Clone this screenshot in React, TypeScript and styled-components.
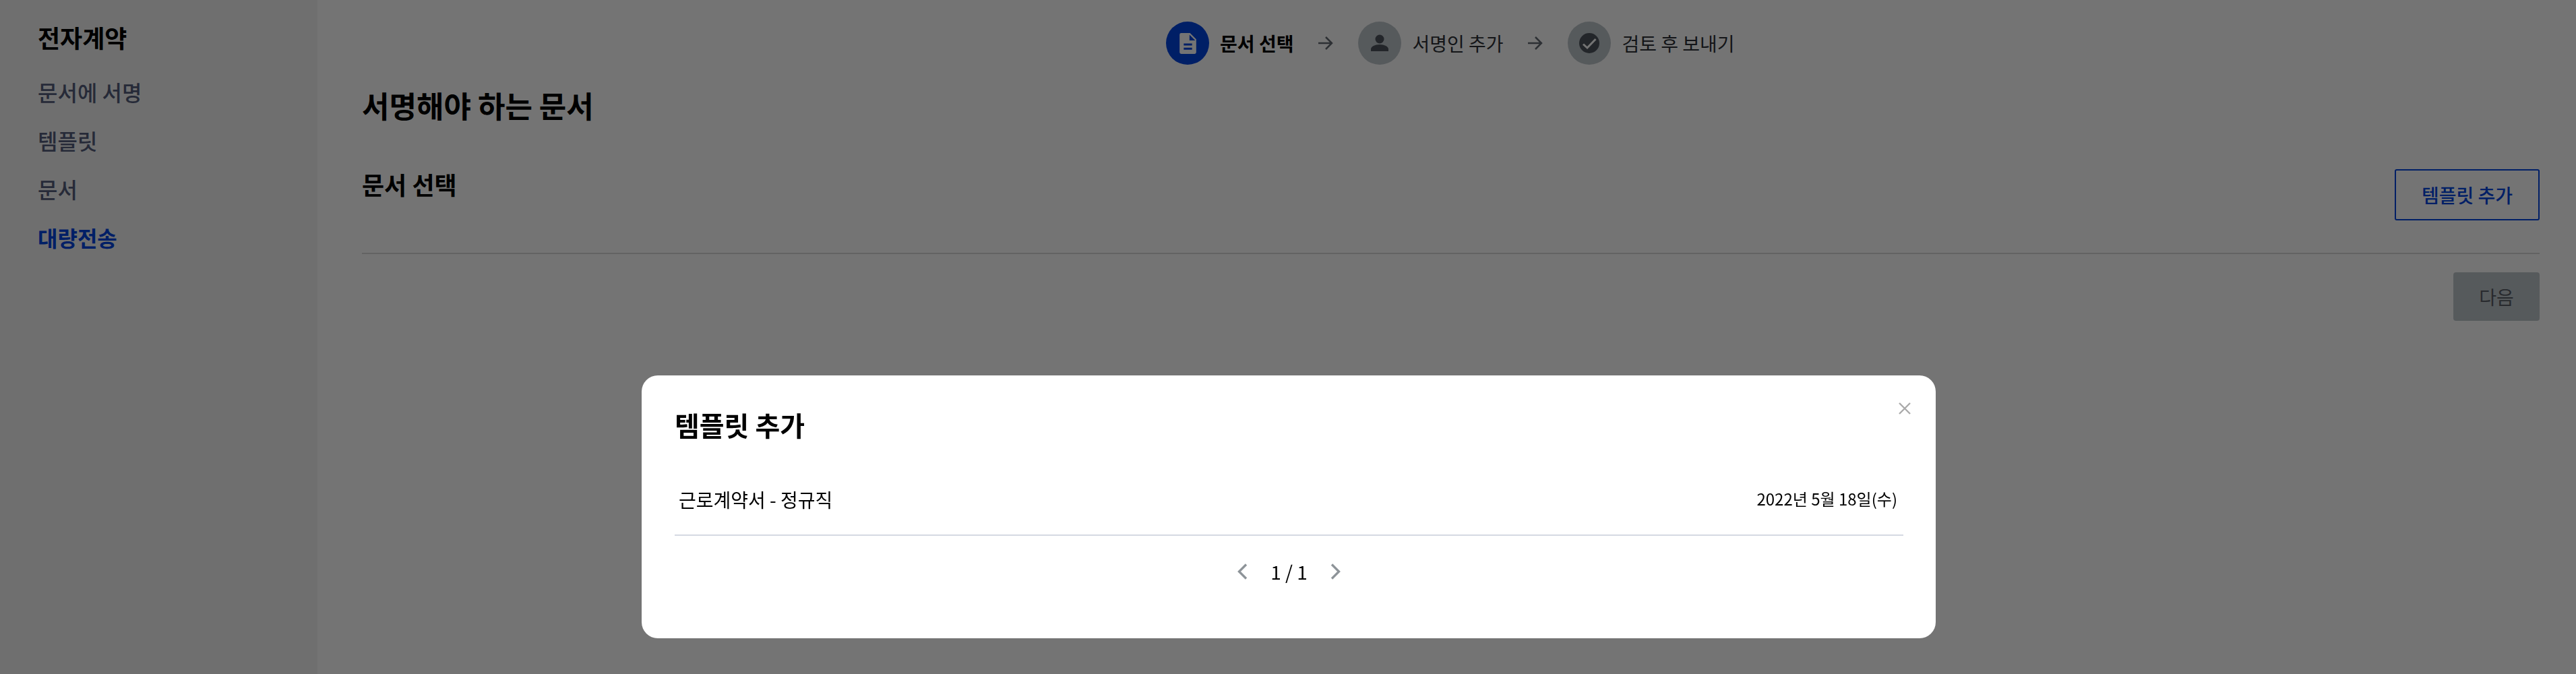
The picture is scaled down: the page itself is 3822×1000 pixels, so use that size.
import React from 'react';
import styled, { createGlobalStyle } from 'styled-components';

const Global = createGlobalStyle`
  html, body { margin: 0; padding: 0; background: #fff; }
  body { font-family: "Noto Sans CJK KR", "Noto Sans", sans-serif; color: #000; }
  * { box-sizing: border-box; }
`;

const Page = styled.div`
  position: relative;
  display: flex;
  width: 3822px;
  height: 1000px;
  overflow: hidden;
`;

const Sidebar = styled.aside`
  width: 471px;
  flex: none;
  background: #f4f4f4;
  padding: 33px 56px;
`;

const SideTitle = styled.div`
  font-size: 36px;
  font-weight: 700;
  line-height: 44px;
  margin-bottom: 23px;
`;

const SideItem = styled.div<{ $active?: boolean }>`
  font-size: 32px;
  font-weight: ${(p) => (p.$active ? 700 : 500)};
  line-height: 72px;
  color: ${(p) => (p.$active ? '#0044e0' : '#555e7c')};
`;

const Main = styled.main`
  flex: 1;
  padding: 32px 54px 0 66px;
`;

const Steps = styled.div`
  display: flex;
  align-items: center;
  height: 64px;
  margin-left: 1193px;
`;

const Step = styled.div`
  display: flex;
  align-items: center;
  gap: 16px;
`;

const StepCircle = styled.div<{ $active?: boolean }>`
  width: 64px;
  height: 64px;
  border-radius: 50%;
  display: flex;
  align-items: center;
  justify-content: center;
  background: ${(p) => (p.$active ? '#0044e0' : '#bec5cb')};
  color: ${(p) => (p.$active ? '#fff' : '#4d545c')};
`;

const StepLabel = styled.span<{ $active?: boolean }>`
  font-size: 28px;
  font-weight: ${(p) => (p.$active ? 700 : 400)};
  color: ${(p) => (p.$active ? '#000' : '#2c3036')};
`;

const StepArrow = styled.span`
  display: flex;
  margin: 0 37px;
  color: #636a72;
`;

const PageTitle = styled.h1`
  margin: 28px 0 0;
  font-size: 44px;
  font-weight: 700;
  line-height: 64px;
`;

const SectionRow = styled.div`
  display: flex;
  justify-content: space-between;
  align-items: flex-start;
  margin-top: 63px;
  padding-bottom: 48px;
  border-bottom: 2px solid #d9d9d9;
`;

const SectionTitle = styled.h2`
  margin: -2px 0 0;
  font-size: 36px;
  font-weight: 700;
  line-height: 48px;
`;

const OutlineButton = styled.div`
  width: 215px;
  height: 76px;
  border: 2px solid #0044e0;
  border-radius: 3px;
  color: #0044e0;
  font-size: 28px;
  font-weight: 500;
  display: flex;
  align-items: center;
  justify-content: center;
`;

const Footer = styled.div`
  display: flex;
  justify-content: flex-end;
  margin-top: 27px;
`;

const NextButton = styled.div`
  width: 128px;
  height: 72px;
  border-radius: 4px;
  background: #bec5cb;
  color: #585e65;
  font-size: 28px;
  display: flex;
  align-items: center;
  justify-content: center;
`;

const Overlay = styled.div`
  position: absolute;
  inset: 0;
  background: rgba(0, 0, 0, 0.545);
  display: flex;
  justify-content: center;
  align-items: flex-start;
  padding: 557px 0 0 2px;
`;

const Modal = styled.div`
  position: relative;
  width: 1920px;
  height: 390px;
  background: #fff;
  border-radius: 24px;
  padding: 43px 48px 0 49px;
  will-change: transform;
`;

const CloseButton = styled.span`
  position: absolute;
  top: 40px;
  right: 37px;
  display: flex;
  color: #aaaaaa;
`;

const ModalTitle = styled.h3`
  margin: 0;
  font-size: 40px;
  font-weight: 700;
  line-height: 60px;
`;

const TemplateRow = styled.div`
  display: flex;
  justify-content: space-between;
  align-items: center;
  height: 106px;
  margin-top: 29px;
  padding: 0 9px 0 6px;
  border-bottom: 2px solid #d5d9e2;
`;

const TemplateName = styled.span`
  font-size: 28px;
`;

const TemplateDate = styled.span`
  font-size: 24px;
  margin-bottom: 4px;
`;

const Pager = styled.div`
  display: flex;
  justify-content: center;
  align-items: center;
  gap: 34px;
  margin-top: 33px;
  color: #8e9499;
`;

const PagerText = styled.span`
  font-size: 28px;
  color: #000;
  line-height: 40px;
`;

const Icon = styled.svg`
  display: block;
`;

const Arrow = () => (
  <Icon width="22" height="22" viewBox="0 0 22 22" fill="none" stroke="currentColor" strokeWidth="2.5">
    <path d="M0 11h20M11 2l9 9-9 9" />
  </Icon>
);

export default function App() {
  return (
    <Page>
      <Global />
      <Sidebar>
        <SideTitle>전자계약</SideTitle>
        <SideItem>문서에 서명</SideItem>
        <SideItem>템플릿</SideItem>
        <SideItem>문서</SideItem>
        <SideItem $active>대량전송</SideItem>
      </Sidebar>
      <Main>
        <Steps>
          <Step>
            <StepCircle $active>
              <Icon width="37" height="37" viewBox="0 0 24 24" fill="currentColor">
                <path d="M14 2H5.5A1.5 1.5 0 0 0 4 3.5v17A1.5 1.5 0 0 0 5.5 22h13a1.5 1.5 0 0 0 1.5-1.5V8l-6-6zm2 16H8v-2h8v2zm0-4H8v-2h8v2zm-2.5-5V3.5L19 9h-5.500z" />
              </Icon>
            </StepCircle>
            <StepLabel $active>문서 선택</StepLabel>
          </Step>
          <StepArrow><Arrow /></StepArrow>
          <Step>
            <StepCircle>
              <Icon width="26" height="26" viewBox="0 0 26 26" fill="currentColor">
                <circle cx="13" cy="7" r="6.500" />
                <path d="M0 25v-3c0-4 6-7 13-7s13 3 13 7v3z" />
              </Icon>
            </StepCircle>
            <StepLabel>서명인 추가</StepLabel>
          </Step>
          <StepArrow><Arrow /></StepArrow>
          <Step>
            <StepCircle>
              <Icon width="30" height="30" viewBox="0 0 30 30" fill="none">
                <circle cx="15" cy="15" r="15" fill="currentColor" />
                <path d="M6 16.500l6 5.500L24.500 9" stroke="#fff" strokeWidth="3" />
              </Icon>
            </StepCircle>
            <StepLabel>검토 후 보내기</StepLabel>
          </Step>
        </Steps>
        <PageTitle>서명해야 하는 문서</PageTitle>
        <SectionRow>
          <SectionTitle>문서 선택</SectionTitle>
          <OutlineButton>템플릿 추가</OutlineButton>
        </SectionRow>
        <Footer>
          <NextButton>다음</NextButton>
        </Footer>
      </Main>
      <Overlay>
        <Modal>
          <CloseButton>
            <Icon width="18" height="18" viewBox="0 0 18 18" fill="none" stroke="currentColor" strokeWidth="2.400">
              <path d="M1 1l16 16M17 1L1 17" />
            </Icon>
          </CloseButton>
          <ModalTitle>템플릿 추가</ModalTitle>
          <TemplateRow>
            <TemplateName>근로계약서 - 정규직</TemplateName>
            <TemplateDate>2022년 5월 18일(수)</TemplateDate>
          </TemplateRow>
          <Pager>
            <Icon width="16" height="24" viewBox="0 0 16 24" fill="none" stroke="currentColor" strokeWidth="3.400">
              <path d="M14 1.500L3.500 12 14 22.500" />
            </Icon>
            <PagerText>1 / 1</PagerText>
            <Icon width="16" height="24" viewBox="0 0 16 24" fill="none" stroke="currentColor" strokeWidth="3.400">
              <path d="M2 1.500L12.500 12 2 22.500" />
            </Icon>
          </Pager>
        </Modal>
      </Overlay>
    </Page>
  );
}
